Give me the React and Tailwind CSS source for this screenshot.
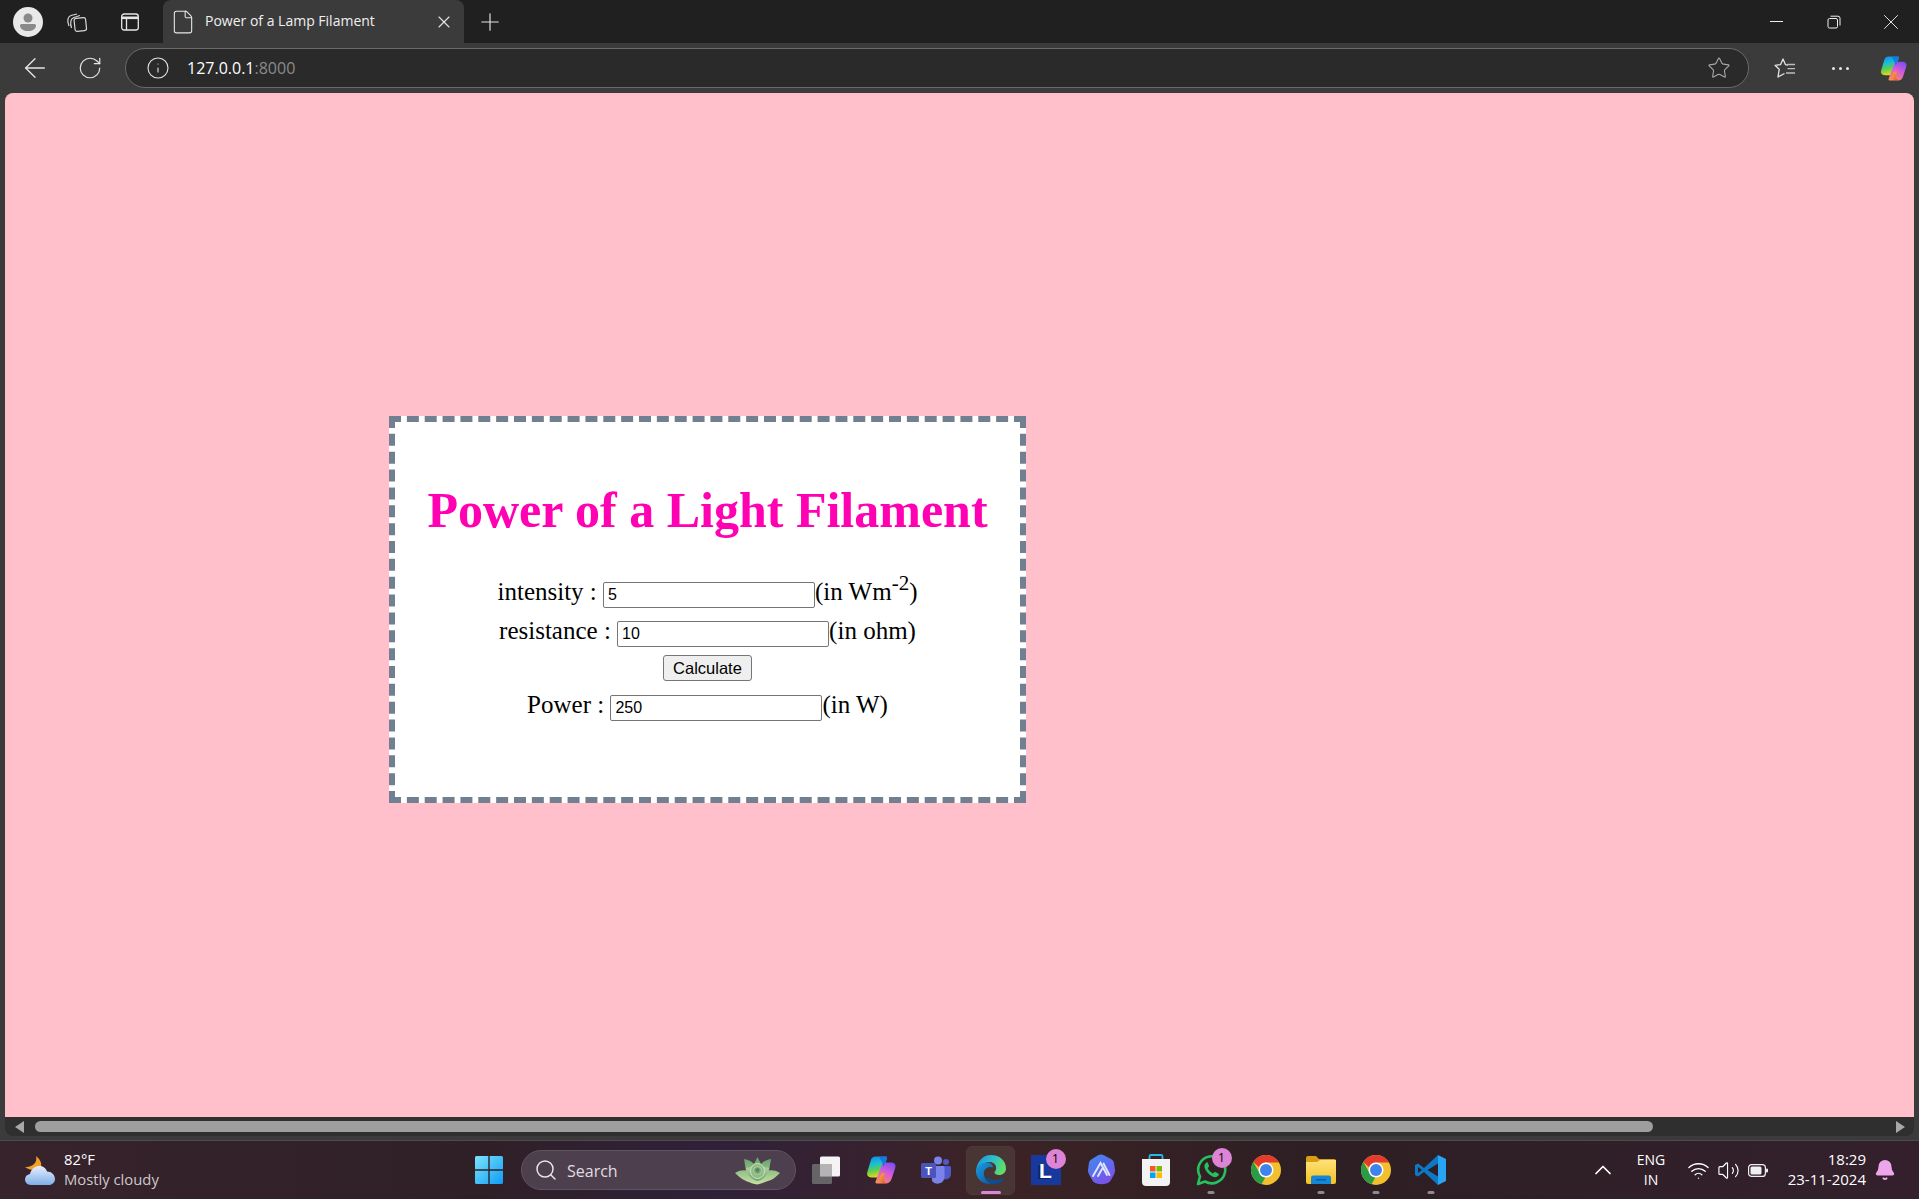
import { ArrowLeft, RotateCw, Info, Star, X, Plus, ChevronUp, Search, File, Wifi, Volume2, Bell } from 'lucide-react';

function Slot({ w, children }) {
  return <div className={`flex h-full shrink-0 items-center justify-center ${w}`}>{children}</div>;
}

function Avatar() {
  return (
    <svg width="30" height="30" viewBox="0 0 30 30">
      <circle cx="15" cy="15" r="15" fill="#e9e9e9" />
      <circle cx="15" cy="11" r="4.5" fill="#8a8a8a" />
      <path d="M7 18.5c0-1 1-1.5 2-1.5h12c1 0 2 .5 2 1.5 0 3.5-3.5 5.5-8 5.5s-8-2-8-5.5z" fill="#8a8a8a" />
    </svg>
  );
}

function Workspaces() {
  return (
    <svg width="22" height="22" viewBox="0 0 22 22" fill="none" stroke="#d8d8d8" strokeWidth="1.2">
      <path d="M3 15c-1-2-1.5-5-1-7 .4-2 1.5-3 3-3.5l6-1.5" />
      <path d="M5.5 17c-.8-2-1-5-.6-7 .3-2 1.5-3 3-3.5l6-2" />
      <rect x="8.5" y="7" width="11.5" height="13" rx="2" transform="rotate(-6 14 13)" />
    </svg>
  );
}

function VerticalTabs() {
  return (
    <svg width="20" height="20" viewBox="0 0 20 20" fill="none" stroke="#e6e6e6" strokeWidth="1.3">
      <rect x="1.7" y="2" width="16.6" height="16" rx="2.5" />
      <path d="M1.7 5.8h16.6" strokeWidth="2.6" />
      <path d="M6.5 6v12" />
    </svg>
  );
}

function Restore() {
  return (
    <svg width="14" height="14" viewBox="0 0 14 14" fill="none" stroke="#f0f0f0" strokeWidth="1">
      <rect x="1" y="3.5" width="9.5" height="9.5" rx="1.5" />
      <path d="M3.5 1.2h7.5a2 2 0 0 1 2 2v7.3" />
    </svg>
  );
}

function FavList() {
  return (
    <svg width="22" height="21" viewBox="0 0 22 21" fill="none" stroke="#e6e6e6" strokeWidth="1.3" strokeLinejoin="round">
      <path d="M14 7l-2.6-.4L9 1 6.6 6.6 1 7.3l4.2 4L4 19l6.5-3.5" />
      <path d="M13.5 6.5H21M13.5 10.7H21M12 15H21" stroke="#bdbdbd" />
    </svg>
  );
}

function Copilot({ size = 27, id = 'a' }) {
  return (
    <svg width={size} height={size} viewBox="0 0 28 28">
      <defs>
        <linearGradient id={`cpA${id}`} x1="0.3" y1="0" x2="0.5" y2="1">
          <stop offset="0" stopColor="#1290f0" />
          <stop offset="0.35" stopColor="#18c0d0" />
          <stop offset="0.65" stopColor="#5fd04a" />
          <stop offset="1" stopColor="#f7d51d" />
        </linearGradient>
        <linearGradient id={`cpB${id}`} x1="0.8" y1="0" x2="0.3" y2="1">
          <stop offset="0" stopColor="#7a4df5" />
          <stop offset="0.5" stopColor="#d85cd8" />
          <stop offset="1" stopColor="#f58a5a" />
        </linearGradient>
        <linearGradient id={`cpC${id}`} x1="0" y1="0" x2="1" y2="1">
          <stop offset="0" stopColor="#f6b52e" />
          <stop offset="1" stopColor="#ee4a35" />
        </linearGradient>
      </defs>
      <path d="M9 1.5h9c1.5 0 2 .6 1.5 2L14.5 17c-1 2.8-2.5 4-5 4H5c-3 0-4.5-2-3.8-4.8L4.5 5C5.2 2.7 6.8 1.5 9 1.5z" fill={`url(#cpA${id})`} />
      <path d="M19 7h4.5c3 0 4.7 2 3.8 4.8L24 22c-.8 2.8-2.5 4.5-5 4.5h-8.5c-1.5 0-2-.7-1.5-2L14 11c1-2.7 2.7-4 5-4z" fill={`url(#cpB${id})`} />
      <path d="M14.5 17l-1.5 4.5c-.7 2 .2 3.5 2 4.5h4c-2-1-3-2.5-2.5-4.5L18 17z" fill={`url(#cpC${id})`} />
      <path d="M12 1.5h6.5c1 0 1.5.6 1 2L16.5 11c-.8-2.5-2.5-6-4.5-9.5z" fill="#1668e0" opacity="0.75" />
    </svg>
  );
}

function WinLogo() {
  return (
    <svg width="30" height="30" viewBox="0 0 30 30">
      <defs>
        <linearGradient id="winG" x1="0" y1="0" x2="1" y2="1">
          <stop offset="0" stopColor="#7ce4fb" />
          <stop offset="1" stopColor="#0f9bf5" />
        </linearGradient>
      </defs>
      <path d="M1 2.5A1.5 1.5 0 0 1 2.5 1h11.8v13.3H1zM15.7 1h11.8A1.5 1.5 0 0 1 29 2.5v11.8H15.7zM1 15.7h13.3V29H2.5A1.5 1.5 0 0 1 1 27.5zM15.7 15.7H29v11.8a1.5 1.5 0 0 1-1.5 1.5H15.7z" fill="url(#winG)" />
    </svg>
  );
}

function Succulent() {
  return (
    <svg width="45" height="29" viewBox="0 0 45 29">
      <defs>
        <linearGradient id="sucA" x1="0" y1="0" x2="0" y2="1">
          <stop offset="0" stopColor="#5f9f6a" />
          <stop offset="1" stopColor="#c8dfa0" />
        </linearGradient>
        <linearGradient id="sucB" x1="0" y1="0" x2="0" y2="1">
          <stop offset="0" stopColor="#b9dca8" />
          <stop offset="1" stopColor="#6da273" />
        </linearGradient>
      </defs>
      <path d="M0 17c4-2.5 8-3 11-2.5L9 3c4 .5 8 2.5 10 5L22.5 1l3.5 7c2-2.5 6-4.5 10-5l-2 11.5c3-.5 7 0 11 2.5-4 4-8 7-12 8-3 1-6 2.5-10.5 3.5C18 28 15 26.5 12 25.5 8 24 4 21 0 17z" fill="url(#sucA)" />
      <path d="M11 12c3-1 6-1 8 0l3.500-3.500L26 12c2-1 5-1 8 0-1 7-6 12-11.500 13C17 24 12 19 11 12z" fill="url(#sucB)" />
      <ellipse cx="22.5" cy="15" rx="7" ry="7.5" fill="#8dbb85" stroke="#cfe3b8" strokeWidth="1" />
      <circle cx="22.5" cy="14.5" r="4" fill="#76a578" stroke="#c0d9ac" strokeWidth="0.8" />
      <circle cx="22.5" cy="14" r="1.8" fill="#55805c" />
    </svg>
  );
}

function WeatherIcon() {
  return (
    <svg width="30" height="29" viewBox="0 0 30 29">
      <defs>
        <linearGradient id="cloudG" x1="0" y1="0" x2="0" y2="1">
          <stop offset="0" stopColor="#e6eefb" />
          <stop offset="1" stopColor="#7fb0ea" />
        </linearGradient>
      </defs>
      <path d="M11 0c4 3 6 7 5 11-3 4-11 4-16 0 5 0 9-2 10.5-5 1-2 1-4 .5-6z" fill="#f0a028" />
      <path d="M6 29c-4 0-6-3-6-5.5 0-3 2-5 5-5.500 1-5 5-8 9-8s7 2 8 5.500c4.500 0 8 3.500 8 7.500 0 3.500-3 6-6 6z" fill="url(#cloudG)" />
    </svg>
  );
}

function TaskView() {
  return (
    <svg width="30" height="28" viewBox="0 0 30 28">
      <rect x="9" y="0.5" width="20" height="20" rx="1.5" fill="#f4f4f4" />
      <rect x="1" y="8" width="20" height="20" rx="1.5" fill="#6b6b6b" fillOpacity="0.9" />
      <rect x="9" y="8" width="12" height="12.5" fill="#b4b4b4" />
    </svg>
  );
}

function Teams() {
  return (
    <svg width="30" height="30" viewBox="0 0 30 30">
      <circle cx="17" cy="5.5" r="4" fill="#7b83eb" />
      <circle cx="25" cy="7" r="3" fill="#5059c9" />
      <path d="M20 11h8.5c.8 0 1.5.7 1.5 1.5V19a5.5 5.5 0 0 1-9.700 3.500z" fill="#5059c9" />
      <path d="M11 11h11c.8 0 1.5.7 1.5 1.5V22a7 7 0 0 1-12.500 4z" fill="#7b83eb" />
      <rect x="0" y="8" width="15" height="15" rx="1.5" fill="#4b53bc" />
      <text x="7.5" y="19.5" textAnchor="middle" fontSize="11" fontWeight="700" fill="#fff" fontFamily="Liberation Sans, sans-serif">T</text>
    </svg>
  );
}

function Edge() {
  return (
    <svg width="30" height="32" viewBox="0 0 30 32">
      <defs>
        <linearGradient id="edgeA" x1="0" y1="0" x2="1" y2="0.3">
          <stop offset="0" stopColor="#1e8fe0" />
          <stop offset="0.6" stopColor="#2cc0c8" />
          <stop offset="1" stopColor="#5fdc6a" />
        </linearGradient>
        <linearGradient id="edgeB" x1="0" y1="0" x2="0.8" y2="1">
          <stop offset="0" stopColor="#1b9de2" />
          <stop offset="1" stopColor="#0c5aa8" />
        </linearGradient>
      </defs>
      <path d="M15 1c9 0 15 6.2 15 13.5 0 4-3 6.5-7 6.5-2.5 0-4.500-1-4.500-2.500 0-1 .8-1.500 1.300-2.500.9-2 .3-5-2-6.800C14.500 7.200 9 7.500 5.500 11 3 13.500 1.500 15.500 0 19 0 8 6.500 1 15 1z" fill="url(#edgeA)" />
      <path d="M0 17C1 12 6 8.500 11 8.500c3 0 6 2 6 5-2-1-5-1-7.500 1.500-2.500 2.500-2 7 .5 10.500 1.500 2 3.500 3.500 6 4.500C7 31 0 25 0 17z" fill="url(#edgeB)" />
      <path d="M10 22c0 3.500 3 7 7 8 5 .5 9.500-2 12-6.500-2 1.500-5 2.500-8 2.500-5 0-9.500-1.500-11-4z" fill="#0b4f93" />
    </svg>
  );
}

function LApp() {
  return (
    <div className="flex h-[30px] w-[30px] items-center justify-center bg-[#17389c] text-[21px] leading-none font-bold text-white [font-family:'Liberation_Sans',sans-serif] [text-shadow:-2px_1px_0_#0e2160]">
      L
    </div>
  );
}

function Affine() {
  return (
    <svg width="28" height="32" viewBox="0 0 28 32">
      <defs>
        <linearGradient id="affG" x1="0" y1="0" x2="0.6" y2="1">
          <stop offset="0" stopColor="#3d8cf0" />
          <stop offset="1" stopColor="#7a52e8" />
        </linearGradient>
      </defs>
      <path d="M11 1.2c2-1 4-1 6 0l7 3.8c2 1.1 3 2.8 3.2 5l.8 6c.1 1.5-.2 2.8-.9 4.2l-3.3 6c-1 1.7-2.4 2.8-4.4 3.4-3.4 1-6.3 1-9.7 0-2-.6-3.4-1.7-4.4-3.4l-3.3-6C1.2 18.8.9 17.5 1 16l.8-6C2 7.800 3 6.100 5 5z" fill="url(#affG)" />
      <path d="M6 22L13.5 9 20 21M11 22l4-7M16.5 9.5L22.5 21" fill="none" stroke="#dfe6ff" strokeWidth="1.9" strokeLinecap="round" />
    </svg>
  );
}

function Store() {
  return (
    <svg width="30" height="34" viewBox="0 0 30 34">
      <path d="M8.5 6V3.5A1.5 1.5 0 0 1 10 2h10a1.5 1.5 0 0 1 1.5 1.5V6" fill="none" stroke="#2ab7e8" strokeWidth="1.8" />
      <path d="M1 6h28v23a4 4 0 0 1-4 4H5a4 4 0 0 1-4-4z" fill="#f3f3f3" />
      <rect x="9" y="13" width="5.5" height="5.5" fill="#ef5b25" />
      <rect x="15.5" y="13" width="5.5" height="5.5" fill="#7fba00" />
      <rect x="9" y="19.5" width="5.5" height="5.5" fill="#00a4ef" />
      <rect x="15.5" y="19.5" width="5.5" height="5.5" fill="#ffb900" />
    </svg>
  );
}

function WhatsApp() {
  return (
    <svg width="32" height="32" viewBox="0 0 32 32">
      <path d="M3 30l2-7.5A13.5 13.5 0 1 1 10 27.5z" fill="none" stroke="#25c15c" strokeWidth="2.6" strokeLinejoin="round" />
      <path d="M11.5 8.5c-1.500 1-2.500 2.800-2 5 .8 3.500 5.500 8.500 9.500 9.500 2 .5 3.800-.3 4.700-2 .3-.7.2-1.200-.3-1.500l-3-1.500c-.5-.2-.9-.1-1.200.3l-1 1.200c-2.500-1-4.500-3-5.500-5.500l1-1c.4-.4.4-.8.2-1.300L13 8.800c-.3-.6-1-.7-1.500-.3z" fill="#25c15c" />
    </svg>
  );
}

function Chrome() {
  return (
    <svg width="30" height="30" viewBox="0 0 30 30">
      <circle cx="15" cy="15" r="15" fill="#f2c02e" />
      <path d="M15 0a15 15 0 0 1 13 7.5H15a7.5 7.5 0 0 0-7 4.7L2.3 7A15 15 0 0 1 15 0z" fill="#e33b2e" />
      <path d="M2.3 7l6 10.5a7.5 7.5 0 0 0 6 5L10.5 29.3A15 15 0 0 1 2.3 7z" fill="#2a9c48" />
      <circle cx="15" cy="15" r="7.5" fill="#fff" />
      <circle cx="15" cy="15" r="6" fill="#3f84ec" />
    </svg>
  );
}

function Files() {
  return (
    <svg width="30" height="28" viewBox="0 0 30 28">
      <defs>
        <linearGradient id="fileG" x1="0" y1="0" x2="0" y2="1">
          <stop offset="0" stopColor="#fde27a" />
          <stop offset="1" stopColor="#f7c11f" />
        </linearGradient>
      </defs>
      <path d="M0 2a2 2 0 0 1 2-2h8l3 3h15a2 2 0 0 1 2 2v3H0z" fill="#d99e14" />
      <path d="M0 6h11l3-2h16v22a2 2 0 0 1-2 2H2a2 2 0 0 1-2-2z" fill="url(#fileG)" />
      <path d="M5 28v-6.5a2 2 0 0 1 2-2h16a2 2 0 0 1 2 2V28z" fill="#1687d6" />
      <rect x="10" y="23" width="10" height="1.5" fill="#0b5ea6" />
    </svg>
  );
}

function VsCode() {
  return (
    <svg width="32" height="32" viewBox="0 0 32 32">
      <path d="M23 1L9 14 3 9.5 0 11v10l3 1.5L9 18l14 13z" fill="#0d78c6" />
      <path d="M23 1l8 4v22l-8 4z" fill="#27a5f2" />
      <path d="M23 9.5L12.5 16 23 22.5z" fill="#2c1f25" />
      <path d="M3 13l4 3-4 3z" fill="#2c1f25" />
    </svg>
  );
}

function Battery() {
  return (
    <svg width="20" height="13" viewBox="0 0 20 13">
      <rect x="0.6" y="0.6" width="16.8" height="11.8" rx="3" fill="none" stroke="#f0f0f0" strokeWidth="1.2" />
      <rect x="2.5" y="2.5" width="11" height="8" rx="1.5" fill="#f0f0f0" />
      <rect x="18" y="4.5" width="2" height="4" rx="1" fill="#f0f0f0" />
    </svg>
  );
}

function Badge() {
  return (
    <span className="absolute -top-[6px] -right-[5px] flex h-[20px] w-[20px] items-center justify-center rounded-full bg-[#dd84d6] text-[12px] text-black">
      1
    </span>
  );
}

function AppButton({ children, badge, dot, active }) {
  return (
    <div className="relative flex h-full w-[55px] shrink-0 items-center justify-center">
      <div className={`relative flex h-[49px] w-[49px] items-center justify-center rounded-md ${active ? 'border border-[#4b3a3c] bg-[#4a3535]' : ''}`}>
        <div className="relative">
          {children}
          {badge && <Badge />}
        </div>
      </div>
      {dot && <span className="absolute bottom-[5px] left-1/2 h-[3px] w-[7px] -translate-x-1/2 rounded-full bg-[#8f8a8c]" />}
      {active && <span className="absolute bottom-[5px] left-1/2 h-[3px] w-[20px] -translate-x-1/2 rounded-full bg-[#dd84d6]" />}
    </div>
  );
}

function Row({ label, value, children }) {
  return (
    <div className="flex h-[39px] items-baseline">
      <span>{label} :&nbsp;</span>
      <input readOnly value={value} className="h-[26px] w-[212px] rounded-[2px] border border-[#767676] bg-white px-[4px] text-[16px] [font-family:'Liberation_Sans',sans-serif]" />
      <span>{children}</span>
    </div>
  );
}

export default function App() {
  return (
    <div className="flex h-[1199px] w-[1919px] flex-col overflow-hidden bg-[#3b3b3b] [font-family:'Open_Sans',sans-serif]">
      {/* tab strip */}
      <div className="flex h-[43px] shrink-0 items-center bg-[#202020] text-[#e6e6e6]">
        <Slot w="w-[56px]"><Avatar /></Slot>
        <Slot w="w-[42px]"><Workspaces /></Slot>
        <Slot w="w-[64px]"><VerticalTabs /></Slot>
        <div className="ml-px flex h-full w-[301px] shrink-0 items-center rounded-t-lg bg-[#3b3b3b]">
          <File size={26} strokeWidth={1} className="ml-[7px] text-[#e6e6e6]" />
          <span className="mb-[2px] ml-[9px] flex-1 text-[14px] text-[#f0f0f0]">Power of a Lamp Filament</span>
          <X size={20} strokeWidth={1.3} className="mr-[10px] text-[#e6e6e6]" />
        </div>
        <Slot w="w-[52px]"><Plus size={28} strokeWidth={1} /></Slot>
        <div className="flex-1" />
        <Slot w="w-[57px]"><span className="h-px w-[13px] bg-[#f0f0f0]" /></Slot>
        <Slot w="w-[57px]"><Restore /></Slot>
        <Slot w="w-[57px]"><X size={26} strokeWidth={0.9} /></Slot>
      </div>

      {/* address toolbar */}
      <div className="flex h-[50px] shrink-0 items-center text-[#e6e6e6]">
        <Slot w="w-[70px]"><ArrowLeft size={32} strokeWidth={1} /></Slot>
        <Slot w="w-[40px]"><RotateCw size={26} strokeWidth={1.1} /></Slot>
        <div className="ml-[15px] flex h-[40px] flex-1 items-center rounded-full border border-[#6a6a6a] bg-[#2a2a2a] pr-[17px] pl-[20px]">
          <Info size={24} strokeWidth={1.1} />
          <span className="ml-[17px] flex-1 text-[16px] text-white">127.0.0.1<span className="text-[#8a8a8a]">:8000</span></span>
          <Star size={24} strokeWidth={1.1} className="text-[#a8a8a8]" />
        </div>
        <Slot w="ml-[11px] w-[50px]"><FavList /></Slot>
        <Slot w="w-[60px]">
          <div className="flex gap-[4px]">
            <span className="h-[3px] w-[3px] rounded-full bg-[#e6e6e6]" />
            <span className="h-[3px] w-[3px] rounded-full bg-[#e6e6e6]" />
            <span className="h-[3px] w-[3px] rounded-full bg-[#e6e6e6]" />
          </div>
        </Slot>
        <Slot w="mr-[3px] w-[46px]"><Copilot id="a" /></Slot>
      </div>

      {/* page */}
      <div className="mx-[5px] flex flex-1 flex-col overflow-hidden rounded-lg">
        <div className="flex-1 overflow-hidden bg-[#ffc0cb] pt-[323px] pl-[384px] [font-family:'Liberation_Serif',serif]">
          <div className="flex h-[387px] w-[637px] flex-col items-center border-[6px] border-dashed border-[#708090] bg-white text-[25px] leading-[29px] text-black">
            <h1 className="mt-[59px] mb-[38px] text-[50px] leading-[58px] font-bold text-[#ff00b3]">Power of a Light Filament</h1>
            <Row label="intensity" value="5">(in Wm<sup className="text-[21px]">-2</sup>)</Row>
            <Row label="resistance" value="10">(in ohm)</Row>
            <button className="mb-[9px] h-[26px] w-[89px] shrink-0 rounded-[3px] border border-[#767676] bg-[#efefef] text-[16.5px] leading-none [font-family:'Liberation_Sans',sans-serif]">Calculate</button>
            <Row label="Power" value="250">(in W)</Row>
          </div>
        </div>
        {/* horizontal scrollbar */}
        <div className="flex h-[19px] shrink-0 items-center bg-[#2f2f2f]">
          <span className="ml-[10px] h-0 w-0 border-y-[6px] border-r-[9px] border-y-transparent border-r-[#a8a8a8]" />
          <div className="ml-[11px] h-[11px] w-[1618px] rounded-full bg-[#9e9e9e]" />
          <div className="flex-1" />
          <span className="mr-[9px] h-0 w-0 border-y-[6px] border-l-[9px] border-y-transparent border-l-[#a8a8a8]" />
        </div>
      </div>
      <div className="h-[4px] shrink-0" />

      {/* taskbar */}
      <div className="flex h-[59px] shrink-0 items-center border-t border-[#4c4c4c] bg-[linear-gradient(90deg,#37232b_0%,#2f2027_25%,#30203a_37%,#3c2325_52%,#2d1f24_68%,#33202c_100%)] text-white">
        <div className="flex w-[464px] shrink-0 items-center pl-[25px]">
          <WeatherIcon />
          <div className="mb-[2px] ml-[9px] text-[14.8px] leading-[20px]">
            <div>82°F</div>
            <div className="text-[#cfc8cc]">Mostly cloudy</div>
          </div>
        </div>
        <Slot w="w-[49px]"><WinLogo /></Slot>
        <div className="ml-[8px] flex h-[40px] w-[275px] shrink-0 items-center rounded-full border border-[#5f5560] bg-[#4d3f4e] pr-[15px] pl-[12px]">
          <Search size={24} strokeWidth={1.5} className="text-[#e6e6e6]" />
          <span className="mt-[2px] ml-[9px] flex-1 text-[16px] text-[#e0dce0]">Search</span>
          <Succulent />
        </div>
        <div className="ml-[2px] flex h-full shrink-0">
          <AppButton><TaskView /></AppButton>
          <AppButton><Copilot size={30} id="b" /></AppButton>
          <AppButton><Teams /></AppButton>
          <AppButton active><Edge /></AppButton>
          <AppButton badge><LApp /></AppButton>
          <AppButton><Affine /></AppButton>
          <AppButton><Store /></AppButton>
          <AppButton badge dot><WhatsApp /></AppButton>
          <AppButton><Chrome /></AppButton>
          <AppButton dot><Files /></AppButton>
          <AppButton dot><Chrome /></AppButton>
          <AppButton dot><VsCode /></AppButton>
        </div>
        <div className="flex-1" />
        <Slot w="w-[30px]"><ChevronUp size={28} strokeWidth={1.5} /></Slot>
        <div className="ml-[13px] w-[40px] text-center text-[14px] leading-[20px]">
          <div>ENG</div>
          <div>IN</div>
        </div>
        <Slot w="ml-[12px] w-[30px]"><Wifi size={23} strokeWidth={1.4} /></Slot>
        <Slot w="w-[30px]"><Volume2 size={23} strokeWidth={1.2} /></Slot>
        <Slot w="w-[30px]"><Battery /></Slot>
        <div className="mb-[2px] w-[93px] text-right text-[15px] leading-[20px]">
          <div>18:29</div>
          <div>23-11-2024</div>
        </div>
        <Slot w="ml-[7px] w-[24px]"><Bell size={22} fill="#eda6ea" className="text-[#eda6ea]" /></Slot>
        <div className="w-[22px]" />
      </div>
    </div>
  );
}
